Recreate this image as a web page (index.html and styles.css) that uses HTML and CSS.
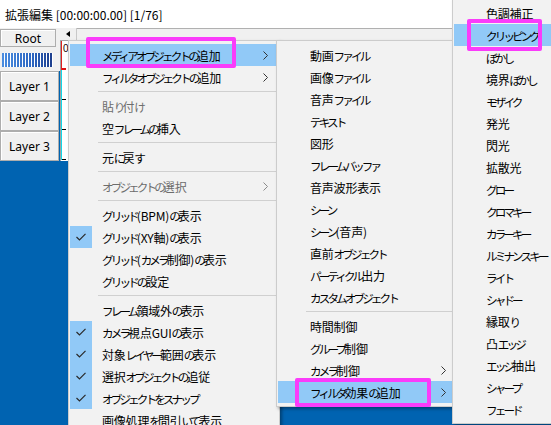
FILE: index.html
```html
<!DOCTYPE html>
<html lang="ja">
<head>
<meta charset="utf-8">
<title>拡張編集</title>
<link rel="stylesheet" href="styles.css">
</head>
<body>
<div class="app">
  <div class="titlebar">拡張編集 [00:00:00.00] [1/76]</div>
  <div class="client">
    <div class="layers">
      <div class="layers-top">
        <div class="root-btn">Root</div>
        <div class="meter"></div>
      </div>
      <div class="layer-btn">Layer 1</div>
      <div class="layer-btn">Layer 2</div>
      <div class="layer-btn">Layer 3</div>
    </div>
    <div class="timeline">
      <div class="hscroll">
        <div class="sbtn"><span class="tri"></span></div>
        <div class="track"></div>
      </div>
      <div class="tl-body">
        <div class="ruler"><span class="zero">0</span><span class="tick red"></span></div>
        <div class="row"><span class="tick"></span></div>
        <div class="row"><span class="tick"></span></div>
        <div class="row"><span class="tick"></span></div>
      </div>
    </div>
  </div>
</div>

<div class="menu menu1">
  <div class="mi sel"><span class="ck"></span><span class="lbl"><span class="k">メディアオブジェクトの</span>追加</span><svg class="arr" width="5" height="9" viewBox="0 0 5 9"><polyline points="0.5,0.5 4.5,4.5 0.5,8.5"/></svg></div>
  <div class="mi"><span class="ck"></span><span class="lbl"><span class="k">フィルタオブジェクトの</span>追加</span><svg class="arr" width="5" height="9" viewBox="0 0 5 9"><polyline points="0.5,0.5 4.5,4.5 0.5,8.5"/></svg></div>
  <div class="sep"></div>
  <div class="mi dis"><span class="ck"></span><span class="lbl">貼<span class="k">り</span>付<span class="k">け</span></span></div>
  <div class="mi"><span class="ck"></span><span class="lbl">空<span class="k">フレームの</span>挿入</span></div>
  <div class="sep"></div>
  <div class="mi"><span class="ck"></span><span class="lbl">元<span class="k">に</span>戻<span class="k">す</span></span></div>
  <div class="sep"></div>
  <div class="mi dis"><span class="ck"></span><span class="lbl"><span class="k">オブジェクトの</span>選択</span><svg class="arr" width="5" height="9" viewBox="0 0 5 9"><polyline points="0.5,0.5 4.5,4.5 0.5,8.5"/></svg></div>
  <div class="sep"></div>
  <div class="mi"><span class="ck"></span><span class="lbl"><span class="k">グリッド</span>(BPM)<span class="k">の</span>表示</span></div>
  <div class="mi"><span class="ck on"><svg width="10" height="8" viewBox="0 0 10 8"><polyline points="0.5,4 3.5,7 9.5,0.8"/></svg></span><span class="lbl"><span class="k">グリッド</span>(XY軸)<span class="k">の</span>表示</span></div>
  <div class="mi"><span class="ck"></span><span class="lbl"><span class="k">グリッド</span>(<span class="k">カメラ</span>制御)<span class="k">の</span>表示</span></div>
  <div class="mi"><span class="ck"></span><span class="lbl"><span class="k">グリッドの</span>設定</span></div>
  <div class="sep"></div>
  <div class="mi"><span class="ck"></span><span class="lbl"><span class="k">フレーム</span>領域外<span class="k">の</span>表示</span></div>
  <div class="mi"><span class="ck on"><svg width="10" height="8" viewBox="0 0 10 8"><polyline points="0.5,4 3.5,7 9.5,0.8"/></svg></span><span class="lbl"><span class="k">カメラ</span>視点GUI<span class="k">の</span>表示</span></div>
  <div class="mi"><span class="ck on"><svg width="10" height="8" viewBox="0 0 10 8"><polyline points="0.5,4 3.5,7 9.5,0.8"/></svg></span><span class="lbl">対象<span class="k">レイヤー</span>範囲<span class="k">の</span>表示</span></div>
  <div class="mi"><span class="ck on"><svg width="10" height="8" viewBox="0 0 10 8"><polyline points="0.5,4 3.5,7 9.5,0.8"/></svg></span><span class="lbl">選択<span class="k">オブジェクトの</span>追従</span></div>
  <div class="mi"><span class="ck on"><svg width="10" height="8" viewBox="0 0 10 8"><polyline points="0.5,4 3.5,7 9.5,0.8"/></svg></span><span class="lbl"><span class="k">オブジェクトをスナップ</span></span></div>
  <div class="mi"><span class="ck"></span><span class="lbl">画像処理<span class="k">を</span>間引<span class="k">いて</span>表示</span></div>
</div>

<div class="menu menu2">
  <div class="mi"><span class="ck"></span><span class="lbl">動画<span class="k">ファイル</span></span></div>
  <div class="mi"><span class="ck"></span><span class="lbl">画像<span class="k">ファイル</span></span></div>
  <div class="mi"><span class="ck"></span><span class="lbl">音声<span class="k">ファイル</span></span></div>
  <div class="mi"><span class="ck"></span><span class="lbl"><span class="k">テキスト</span></span></div>
  <div class="mi"><span class="ck"></span><span class="lbl">図形</span></div>
  <div class="mi"><span class="ck"></span><span class="lbl"><span class="k">フレームバッファ</span></span></div>
  <div class="mi"><span class="ck"></span><span class="lbl">音声波形表示</span></div>
  <div class="mi"><span class="ck"></span><span class="lbl"><span class="k">シーン</span></span></div>
  <div class="mi"><span class="ck"></span><span class="lbl"><span class="k">シーン</span>(音声)</span></div>
  <div class="mi"><span class="ck"></span><span class="lbl">直前<span class="k">オブジェクト</span></span></div>
  <div class="mi"><span class="ck"></span><span class="lbl"><span class="k">パーティクル</span>出力</span></div>
  <div class="mi"><span class="ck"></span><span class="lbl"><span class="k">カスタムオブジェクト</span></span></div>
  <div class="sep"></div>
  <div class="mi"><span class="ck"></span><span class="lbl">時間制御</span></div>
  <div class="mi"><span class="ck"></span><span class="lbl"><span class="k">グループ</span>制御</span></div>
  <div class="mi"><span class="ck"></span><span class="lbl"><span class="k">カメラ</span>制御</span><svg class="arr" width="5" height="9" viewBox="0 0 5 9"><polyline points="0.5,0.5 4.5,4.5 0.5,8.5"/></svg></div>
  <div class="mi sel"><span class="ck"></span><span class="lbl"><span class="k">フィルタ</span>効果<span class="k">の</span>追加</span><svg class="arr" width="5" height="9" viewBox="0 0 5 9"><polyline points="0.5,0.5 4.5,4.5 0.5,8.5"/></svg></div>
</div>

<div class="menu menu3">
  <div class="mi"><span class="ck"></span><span class="lbl">色調補正</span></div>
  <div class="mi sel"><span class="ck"></span><span class="lbl"><span class="k">クリッピング</span></span></div>
  <div class="mi"><span class="ck"></span><span class="lbl"><span class="k">ぼかし</span></span></div>
  <div class="mi"><span class="ck"></span><span class="lbl">境界<span class="k">ぼかし</span></span></div>
  <div class="mi"><span class="ck"></span><span class="lbl"><span class="k">モザイク</span></span></div>
  <div class="mi"><span class="ck"></span><span class="lbl">発光</span></div>
  <div class="mi"><span class="ck"></span><span class="lbl">閃光</span></div>
  <div class="mi"><span class="ck"></span><span class="lbl">拡散光</span></div>
  <div class="mi"><span class="ck"></span><span class="lbl"><span class="k">グロー</span></span></div>
  <div class="mi"><span class="ck"></span><span class="lbl"><span class="k">クロマキー</span></span></div>
  <div class="mi"><span class="ck"></span><span class="lbl"><span class="k">カラーキー</span></span></div>
  <div class="mi"><span class="ck"></span><span class="lbl"><span class="k">ルミナンスキー</span></span></div>
  <div class="mi"><span class="ck"></span><span class="lbl"><span class="k">ライト</span></span></div>
  <div class="mi"><span class="ck"></span><span class="lbl"><span class="k">シャドー</span></span></div>
  <div class="mi"><span class="ck"></span><span class="lbl">縁取<span class="k">り</span></span></div>
  <div class="mi"><span class="ck"></span><span class="lbl">凸<span class="k">エッジ</span></span></div>
  <div class="mi"><span class="ck"></span><span class="lbl"><span class="k">エッジ</span>抽出</span></div>
  <div class="mi"><span class="ck"></span><span class="lbl"><span class="k">シャープ</span></span></div>
  <div class="mi"><span class="ck"></span><span class="lbl"><span class="k">フェード</span></span></div>
</div>

<div class="mark mark1"></div>
<div class="mark mark2"></div>
<div class="mark mark3"></div>
</body>
</html>
```

FILE: styles.css
```css
* { box-sizing: border-box; }
html, body { margin: 0; padding: 0; }
body {
  width: 551px;
  height: 425px;
  overflow: hidden;
  position: relative;
  background: #0063b1;
  font-family: "Noto Sans CJK JP", sans-serif;
  font-size: 12px;
  color: #000;
}
.app { display: flex; flex-direction: column; height: 100%; }
.titlebar {
  height: 28px;
  flex: none;
  background: #fff;
  padding-left: 5px;
  display: flex;
  align-items: center;
  color: #000;
}
.client { flex: 1; display: flex; align-items: flex-start; }

/* layer header column */
.layers { width: 60px; flex: none; display: flex; flex-direction: column; }
.layers-top {
  height: 43px;
  background: #f0f0f0;
  padding-top: 1px;
  display: flex;
  flex-direction: column;
}
.root-btn {
  width: 56px;
  height: 18px;
  border: 1px solid #adadad;
  box-shadow: inset 1px 1px #fff;
  background: #f0f0f0;
  display: flex;
  align-items: center;
  justify-content: center;
  font-family: "Noto Sans", sans-serif;
  font-size: 12px;
}
.meter {
  width: 51px;
  height: 14px;
  margin: 6px 0 0 2px;
  background:
    repeating-linear-gradient(90deg, transparent 0 2px, #fff 2px 3px),
    linear-gradient(90deg, #4a8de0, #2b64c0 60%, #1d3d8a);
}
.layer-btn {
  width: 59px;
  height: 30px;
  border: 1px solid #adadad;
  box-shadow: inset 1px 1px #fff;
  background: #f0f0f0;
  display: flex;
  align-items: center;
  justify-content: center;
  font-family: "Noto Sans", sans-serif;
  font-size: 12px;
}

/* timeline */
.timeline { flex: 1; display: flex; flex-direction: column; }
.hscroll {
  height: 13px;
  display: flex;
  background: #f0f0f0;
  border-bottom: 1px solid #a8a8a8;
}
.sbtn {
  width: 17px;
  display: flex;
  align-items: center;
  justify-content: center;
  border-right: 1px solid #c8c8c8;
}
.tri {
  width: 0;
  height: 0;
  border-top: 3px solid transparent;
  border-bottom: 3px solid transparent;
  border-right: 4px solid #000;
}
.track { flex: 1; border-top: 1px solid #b0b0b0; }
.tl-body {
  height: 120px;
  background: #fff;
  border-left: 1px solid #a0a0a0;
  display: flex;
  flex-direction: column;
}
.ruler {
  height: 29px;
  border-left: 1px solid #e02020;
  display: flex;
  flex-direction: column;
  justify-content: space-between;
  padding-top: 3px;
}
.zero {
  font-family: "Liberation Sans", sans-serif;
  font-size: 10px;
  line-height: 9px;
  padding-left: 1px;
  color: #200000;
}
.row {
  height: 30px;
  border-left: 1px solid #10d8e8;
  display: flex;
  flex-direction: column;
  justify-content: flex-end;
}
.tick { display: block; width: 4px; height: 1px; background: #000; }
.tick.red { height: 2px; background: #e01010; }

/* menus */
.menu {
  position: absolute;
  background: #f2f2f2;
  border: 1px solid #cccccc;
  padding: 3px 1px;
  box-shadow: 2px 2px 3px rgba(0, 0, 0, 0.35);
}
.menu1 { left: 68px; top: 40px; width: 212px; z-index: 1; }
.menu2 { left: 276px; top: 40px; width: 182px; z-index: 2; }
.menu3 { left: 452px; top: -2px; width: 110px; z-index: 3; }

.mi {
  height: 22px;
  display: flex;
  align-items: center;
  padding-right: 10px;
  white-space: nowrap;
}
.mi.sel { background: #91c9f7; }
.mi.dis { color: #6d6d6d; }
.ck {
  width: 22px;
  height: 22px;
  flex: none;
  margin-right: 10px;
  display: flex;
  align-items: center;
  justify-content: center;
}
.ck.on { background: #91c9f7; }
.ck svg polyline { fill: none; stroke: #2a2a2a; stroke-width: 1.2; }
.lbl { flex: 1; letter-spacing: -0.2px; }
.k { font-size: 11.6px; letter-spacing: -2.9px; }
.arr { flex: none; }
.arr polyline { fill: none; stroke: #333; stroke-width: 1; }
.mi.dis .arr polyline { stroke: #8a8a8a; }
.sep {
  height: 7px;
  display: flex;
  align-items: center;
  padding-left: 28px;
  padding-right: 1px;
}
.sep::before { content: ""; flex: 1; height: 1px; background: #d0d0d0; }

/* annotation boxes */
.mark {
  position: absolute;
  border: 4px solid #fa3cfa;
  border-radius: 2px;
  z-index: 10;
}
.mark1 { left: 86px; top: 37px; width: 150px; height: 31px; }
.mark2 { left: 295px; top: 378px; width: 136px; height: 29px; }
.mark3 { left: 467px; top: 19px; width: 75px; height: 32px; }
```
